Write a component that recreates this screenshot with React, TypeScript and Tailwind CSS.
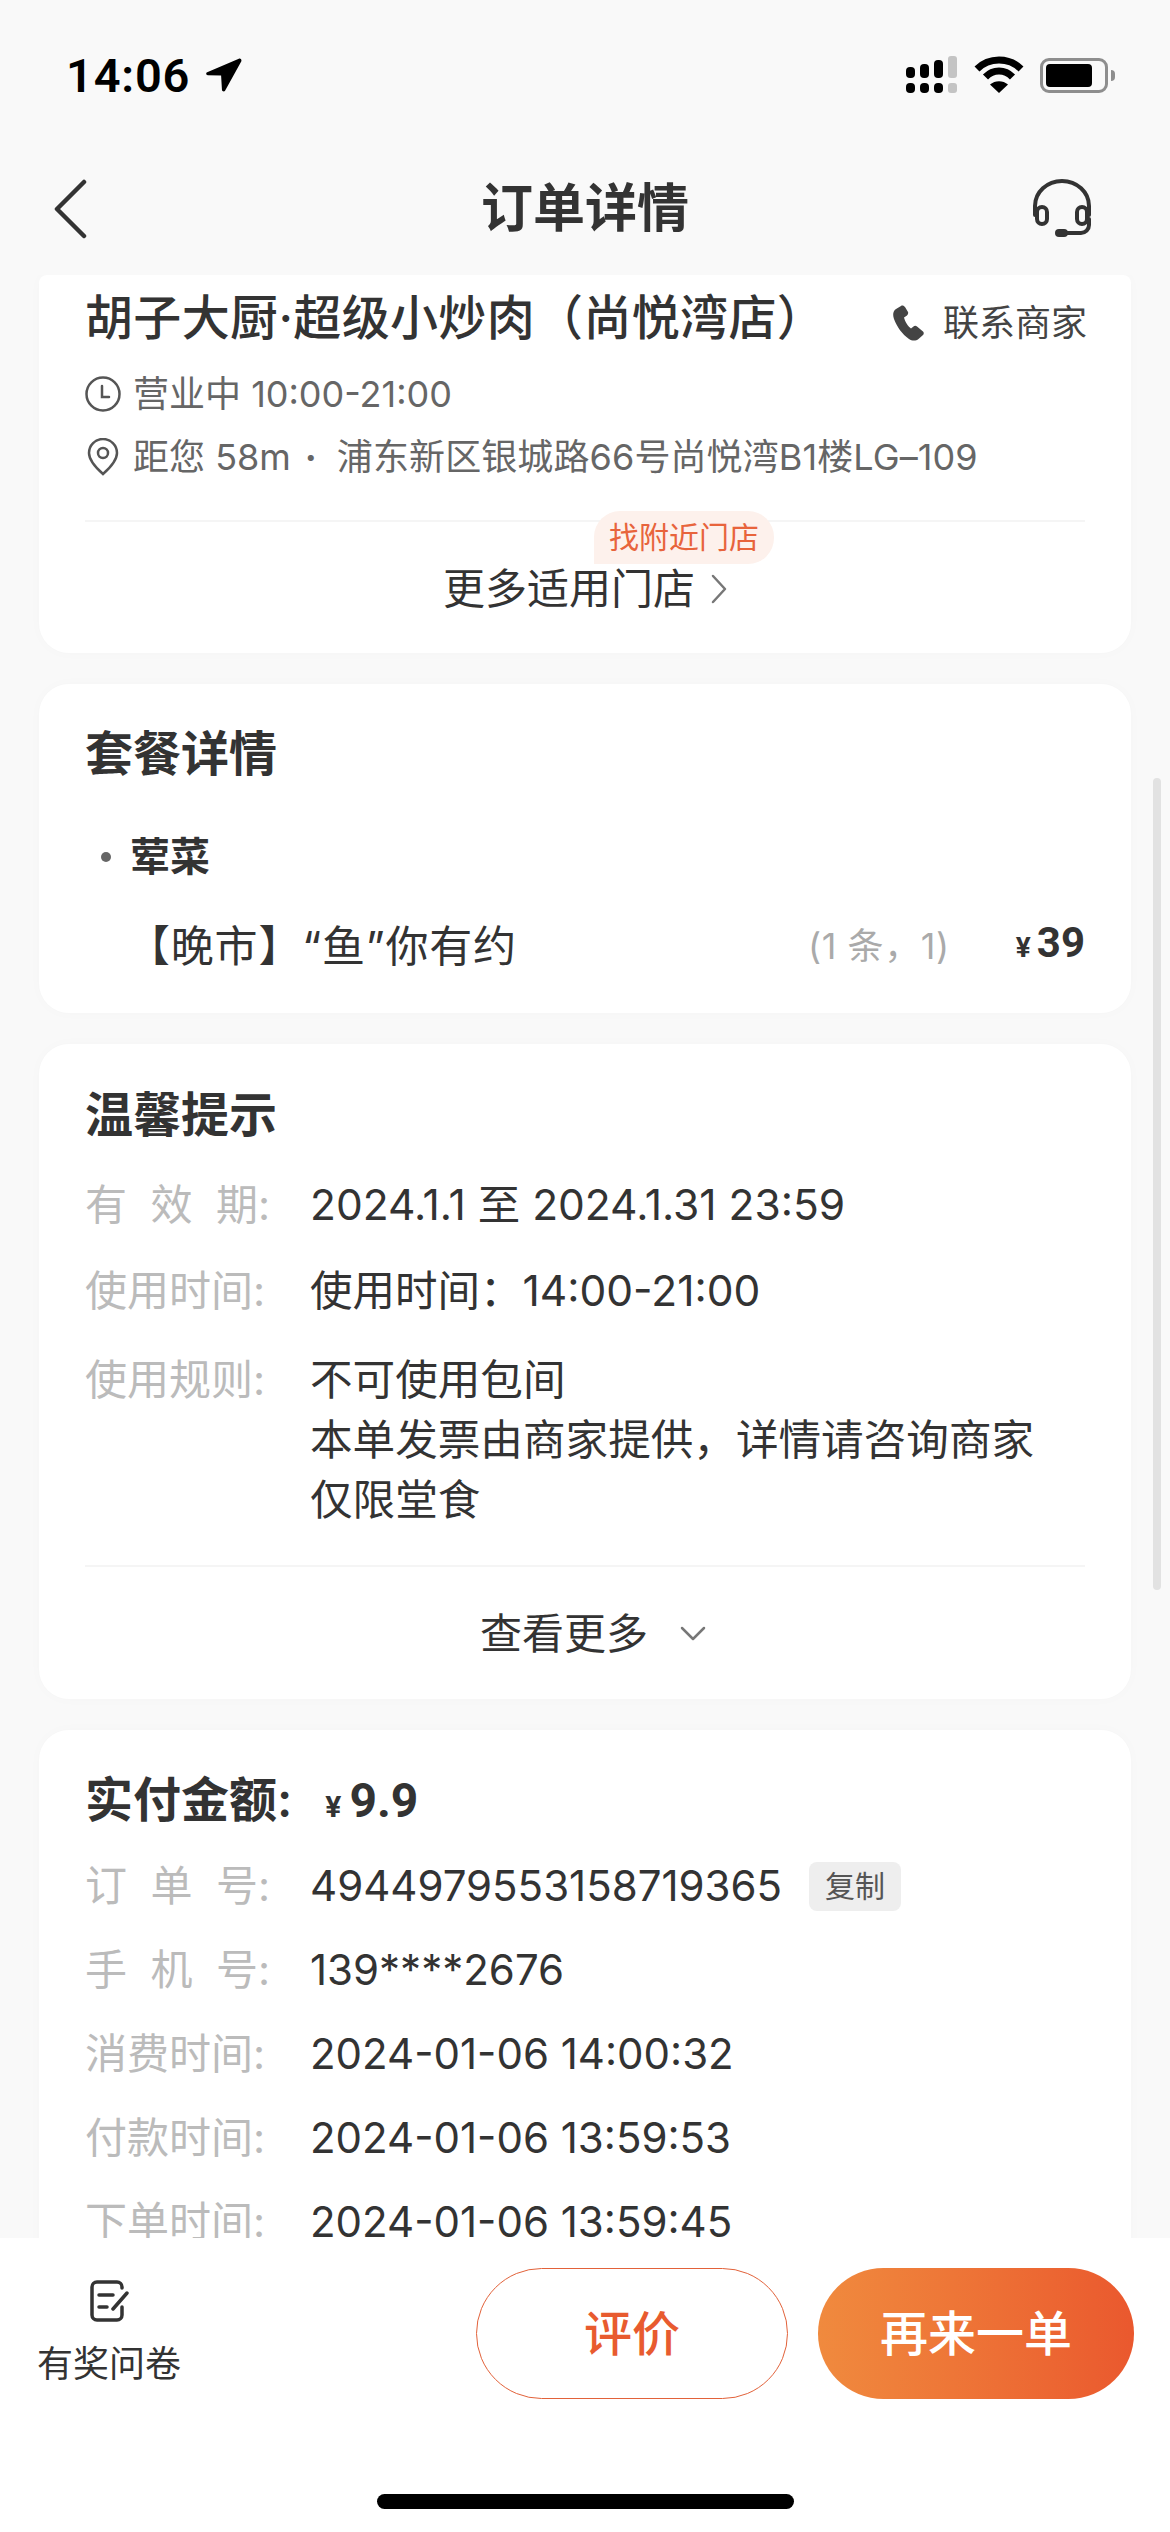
import React from 'react';

const Chevron: React.FC<{ className?: string; d: string; box: string }> = ({ className = '', d, box }) => (
  <svg viewBox={box} className={className} fill="none" stroke="currentColor" strokeLinecap="round" strokeLinejoin="round">
    <path d={d} />
  </svg>
);

const StatusBar = () => (
  <div className="h-[150px] pl-[66px] pr-[55px] flex items-center justify-between shrink-0 text-black">
    <div className="flex items-center gap-[14px]">
      <span className="text-[47px] font-semibold leading-none font-['Roboto',sans-serif] tracking-[0.8px]">14:06</span>
      <svg viewBox="0 0 36 36" className="w-[38px] h-[38px]" fill="currentColor">
        <path d="M33 2.500 3 15.500c-1.500.7-1 2.800.6 2.800l12.600.2.8 13.500c.1 1.800 2.600 2.100 3.200.4L35.400 5c.5-1.600-.9-3.100-2.400-2.500z" />
      </svg>
    </div>
    <div className="flex items-center gap-[16px]">
      <svg viewBox="0 0 52 38" className="w-[52px] h-[38px]">
        <g fill="#000">
          <rect x="0" y="11" width="9" height="11" rx="4" />
          <rect x="14" y="8" width="9" height="14" rx="4" />
          <rect x="28" y="4" width="9" height="18" rx="4" />
          <rect x="0" y="27" width="9" height="10" rx="4" />
          <rect x="14" y="27" width="9" height="10" rx="4" />
          <rect x="28" y="27" width="9" height="10" rx="4" />
        </g>
        <g fill="#c4c4c4">
          <rect x="42" y="0" width="9" height="22" rx="3" />
          <rect x="42" y="27" width="9" height="10" rx="3" />
        </g>
      </svg>
      <svg viewBox="0 0 50 38" className="w-[50px] h-[38px]" fill="none" stroke="#000" strokeWidth="7">
        <path d="M3 13C15 1 35 1 47 13" />
        <path d="M11.500 21C19 13 31 13 38.500 21" />
        <path d="M25 37 16 28.500C21 24 29 24 34 28.500Z" fill="#000" stroke="none" />
      </svg>
      <div className="flex items-center gap-[3px]">
        <div className="w-[68px] h-[35px] rounded-[9px] border-[3px] border-[#8e8e8e] p-[3px]">
          <div className="w-[46px] h-full rounded-[4px] bg-black" />
        </div>
        <div className="w-[4px] h-[11px] rounded-r-full bg-[#8e8e8e]" />
      </div>
    </div>
  </div>
);

const Header = () => (
  <div className="h-[125px] pb-[8px] px-[53px] flex items-center justify-between shrink-0 relative">
    <Chevron box="0 0 34 60" d="M31 3 4 30l27 27" className="w-[34px] h-[60px] text-[#333] [stroke-width:4.5]" />
    <div className="text-[52px] font-semibold text-[#333] absolute left-0 right-0 text-center leading-none">订单详情</div>
    <svg viewBox="0 0 60 60" className="w-[60px] h-[60px] mr-[25px] text-[#333]" fill="none" stroke="currentColor" strokeWidth="4" strokeLinecap="round">
      <path d="M3 36V27a27 25 0 0 1 54 0v9" />
      <rect x="5" y="28" width="10" height="17" rx="5" />
      <rect x="45" y="28" width="10" height="17" rx="5" />
      <path d="M57 40v6a8 8 0 0 1-8 8H31" />
      <path d="M27 54h5" strokeWidth="8" />
    </svg>
  </div>
);

const Card: React.FC<{ children: React.ReactNode; className?: string }> = ({ children, className = '' }) => (
  <div className={`shrink-0 bg-white rounded-[30px] shadow-[0_0_14px_rgba(0,0,0,0.02)] px-[46px] ${className}`}>{children}</div>
);

const InfoRow: React.FC<{ label: React.ReactNode; children: React.ReactNode; className?: string; size?: string }> = ({
  label,
  children,
  className = '',
  size = 'text-[42px]',
}) => (
  <div className={`flex leading-[60px] ${className}`}>
    <div className="w-[225px] shrink-0 text-[#bbbbbb] flex justify-between pr-[40px] text-[42px]">{label}</div>
    <div className={`text-[#333] ${size}`}>{children}</div>
  </div>
);

// spaced labels like 有 效 期: stretch over the label column
const Spaced: React.FC<{ chars: string[] }> = ({ chars }) => (
  <>
    {chars.map((c) => (
      <span key={c}>{c}</span>
    ))}
  </>
);

const StoreCard = () => (
  <Card className="rounded-t-[8px] h-[378px] pt-[18px]">
    <div className="flex items-center justify-between h-[50px]">
      <div className="text-[48px] font-medium text-[#333] leading-none whitespace-nowrap tracking-[0.35px]">胡子大厨·超级小炒肉（尚悦湾店）</div>
      <div className="flex items-center gap-[18px] text-[36px] text-[#444] leading-none mt-[10px] mr-[-2px]">
        <svg viewBox="0 0 32 36" className="w-[32px] h-[36px]" fill="#444">
          <path d="M8 1 3 4C0 6-.5 10 1 14c3 8 8 15 15 20 3 2 7 2 9.500 0l4.500-4c1-1 1-2.500 0-3.500l-6-5c-1-1-2.500-1-3.500 0l-2.500 2c-3-2-6-7-7-11l3-2c1-1 1.500-2 1-3.500L12 2C11 1 9.500 0 8 1z" />
        </svg>
        <span>联系商家</span>
      </div>
    </div>
    <div className="flex items-center gap-[12px] text-[36px] text-[#666] mt-[29px] h-[44px] leading-none">
      <svg viewBox="0 0 36 36" className="w-[36px] h-[36px]" fill="none" stroke="#555" strokeWidth="2.500">
        <circle cx="18" cy="18" r="16.500" />
        <path d="M17 10v11h7" strokeLinecap="round" />
      </svg>
      <span>营业中 10:00-21:00</span>
    </div>
    <div className="flex items-center gap-[12px] text-[36px] text-[#666] mt-[19px] h-[44px] leading-none whitespace-nowrap">
      <svg viewBox="0 0 36 38" className="w-[36px] h-[38px]" fill="none" stroke="#555" strokeWidth="2.500">
        <path d="M18 36C10 29 4 22 4 15a14 14 0 0 1 28 0c0 7-6 14-14 21z" />
        <circle cx="18" cy="15" r="5" />
      </svg>
      <span>
        距您 58m
        <span className="ml-[14px] mr-[20px] font-bold">·</span>
        <span className="tracking-[0.1px]">浦东新区银城路66号尚悦湾B1楼LG–109</span>
      </span>
    </div>
    <div className="relative mt-[41px] h-[2px] bg-[#f5f5f5]">
      <div className="absolute left-[509px] top-[-9px] h-[53px] w-[180px] rounded-[26px] rounded-bl-none bg-[#fdf1ec] text-[#e8643c] text-[30px] leading-[53px] text-center">
        找附近门店
      </div>
    </div>
    <div className="flex items-center justify-center gap-[16px] mt-[46px] text-[42px] leading-none text-[#333]">
      <span>更多适用门店</span>
      <Chevron box="0 0 16 30" d="M2 2l12 13L2 28" className="w-[16px] h-[30px] text-[#777] [stroke-width:2.5]" />
    </div>
  </Card>
);

const PackageCard = () => (
  <Card className="h-[329px] pt-[45px]">
    <div className="text-[48px] font-semibold text-[#333] leading-[50px]">套餐详情</div>
    <div className="flex items-center mt-[53px] pl-[16px] text-[40px] font-semibold text-[#333] leading-[50px]">
      <span className="w-[10px] h-[10px] rounded-full bg-[#666] mr-[19px]" />
      <span>荤菜</span>
    </div>
    <div className="flex items-center mt-[31px] pl-[42px] leading-[60px]">
      <span className="text-[43px] text-[#333] whitespace-nowrap tracking-[0.8px]">【晚市】“鱼”你有约</span>
      <span className="ml-auto text-[36px] text-[#aaaaaa] tracking-[0.6px]">(1 条，1)</span>
      <span className="ml-[66px] flex items-baseline gap-[6px] font-bold text-[#333] font-['Roboto',sans-serif]">
        <span className="text-[28px]">¥</span>
        <span className="text-[42px]">39</span>
      </span>
    </div>
  </Card>
);

const TipsCard = () => (
  <Card className="h-[655px] pt-[46px]">
    <div className="text-[48px] font-semibold text-[#333] leading-[50px]">温馨提示</div>
    <InfoRow className="mt-[35px]" size="text-[42.5px]" label={<Spaced chars={['有', '效', '期:']} />}>2024.1.1 至 2024.1.31 23:59</InfoRow>
    <InfoRow className="mt-[26px]" size="text-[42.5px]" label="使用时间:">使用时间：14:00-21:00</InfoRow>
    <InfoRow className="mt-[29px]" size="text-[42.6px]" label="使用规则:">
      <div>不可使用包间</div>
      <div>本单发票由商家提供，详情请咨询商家</div>
      <div>仅限堂食</div>
    </InfoRow>
    <div className="h-[2px] bg-[#f5f5f5] mt-[35px]" />
    <div className="flex items-center justify-center gap-[32px] mt-[37px] ml-[16px] text-[42px] leading-[60px] text-[#333]">
      <span>查看更多</span>
      <Chevron box="0 0 26 16" d="M2 2l11 11L24 2" className="w-[26px] h-[16px] text-[#777] [stroke-width:2.5]" />
    </div>
  </Card>
);

const PaymentCard = () => (
  <Card className="h-[560px] pt-[45px]">
    <div className="flex items-baseline leading-[50px] text-[#333]">
      <span className="text-[48px] font-semibold">实付金额:</span>
      <span className="ml-[33px] text-[30px] font-bold font-['Roboto',sans-serif]">¥</span>
      <span className="ml-[8px] text-[48px] font-bold font-['Roboto',sans-serif]">9.9</span>
    </div>
    <div className="flex flex-col gap-[24px] mt-[24px]">
      <div className="flex items-center">
        <InfoRow label={<Spaced chars={['订', '单', '号:']} />}>4944979553158719365</InfoRow>
        <div className="ml-[27px] w-[92px] h-[49px] rounded-[8px] bg-[#eeeeee] text-[30px] text-[#555] flex items-center justify-center">复制</div>
      </div>
      <InfoRow label={<Spaced chars={['手', '机', '号:']} />}>139****2676</InfoRow>
      <InfoRow label="消费时间:">2024-01-06 14:00:32</InfoRow>
      <InfoRow label="付款时间:">2024-01-06 13:59:53</InfoRow>
      <InfoRow label="下单时间:">2024-01-06 13:59:45</InfoRow>
    </div>
  </Card>
);

const Footer = () => (
  <div className="relative shrink-0 h-[294px] bg-white">
    <div className="flex items-start pt-[30px] pl-[37px] pr-[36px]">
      <div className="flex flex-col items-center w-[144px] pt-[12px]">
        <svg viewBox="0 0 40 42" className="w-[40px] h-[42px]" fill="none" stroke="#333" strokeWidth="3.500" strokeLinecap="round" strokeLinejoin="round">
          <path d="M33 8V7a5 5 0 0 0-5-5H8a5 5 0 0 0-5 5v28a5 5 0 0 0 5 5h20a5 5 0 0 0 5-5v-8" />
          <path d="M10 15h14M10 27h8M38 13 24 29" />
        </svg>
        <span className="text-[36px] leading-none text-[#333] mt-[24px] whitespace-nowrap">有奖问卷</span>
      </div>
      <div className="ml-auto flex gap-[30px]">
        <div className="w-[312px] h-[131px] rounded-full border border-[#e2623a] text-[#e85b2f] text-[48px] font-medium flex items-center justify-center">评价</div>
        <div className="w-[316px] h-[131px] rounded-full bg-gradient-to-r from-[#f08a3e] to-[#ea582e] text-white text-[48px] font-medium flex items-center justify-center">再来一单</div>
      </div>
    </div>
    <div className="absolute left-[377px] bottom-[23px] w-[417px] h-[15px] rounded-full bg-black" />
  </div>
);

export default function App() {
  return (
    <div className="w-[1170px] h-[2532px] bg-[#f9f9f9] flex flex-col overflow-hidden font-['Inter','Noto_Sans_CJK_SC',sans-serif]">
      <StatusBar />
      <Header />
      <div className="relative flex-1 min-h-0 overflow-hidden px-[39px] flex flex-col gap-[31px]">
        <StoreCard />
        <PackageCard />
        <TipsCard />
        <PaymentCard />
        <div className="absolute left-[1153px] top-[503px] w-[8px] h-[812px] rounded-full bg-[#e2e2e2]" />
      </div>
      <Footer />
    </div>
  );
}
